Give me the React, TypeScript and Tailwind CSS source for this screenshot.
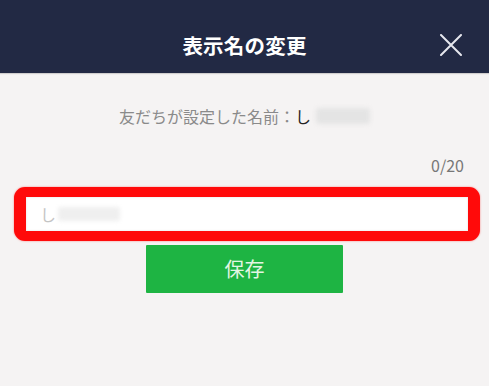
import React from 'react';

const jp = { fontFamily: '"Noto Sans CJK JP", "Noto Sans", sans-serif' };

function CloseIcon() {
  return (
    <svg width="22" height="22" viewBox="0 0 22 22" fill="none" className="text-[#e6e7ee]">
      <path d="M1 1L21 21M21 1L1 21" stroke="currentColor" strokeWidth="2" strokeLinecap="round" />
    </svg>
  );
}

export default function App() {
  return (
    <div className="w-[489px] h-[386px] bg-[#f5f3f3] overflow-hidden" style={jp}>
      {/* header */}
      <header className="relative h-[73px] bg-[#222944] pt-[17px] shadow-[0_1px_1px_rgba(0,0,0,0.15)]">
        <div className="h-[56px] flex items-center justify-center">
          <h1 className="text-white text-[20.5px] font-bold leading-none tracking-[0.2px]">表示名の変更</h1>
        </div>
        <button className="absolute left-[440px] top-[34px]">
          <CloseIcon />
        </button>
      </header>

      <main className="flex flex-col">
        <div className="mt-[31px] flex items-center justify-center text-[16px] leading-[24px]">
          <span className="text-[#8a8a8a]">友だちが設定した名前：</span>
          <span className="text-[#222]">し</span>
          <span className="ml-[5px] w-[54px] h-[16px] bg-[#e4e4e4] rounded-[3px] blur-[2px]"></span>
        </div>

        <div className="mt-[27px] pr-[25px] text-right text-[16px] leading-[20px] text-[#777]">0/20</div>

        <div className="mt-[12px] ml-[14px] w-[466px] h-[54px] rounded-[11px] border-y-[10px] border-x-[12px] border-[#ff0a0a] bg-white shadow-[0_0_2px_rgba(255,0,0,0.5)]">
          <div className="h-full flex items-center pl-[14px] shadow-[inset_0_0_2px_rgba(0,0,0,0.15)]">
            <span className="text-[16px] text-[#c4c4c4] leading-none">し</span>
            <span className="ml-[2px] w-[62px] h-[14px] bg-[#efefef] rounded-[3px] blur-[2px]"></span>
          </div>
        </div>

        <button className="mt-[4px] mx-auto w-[197px] h-[48px] bg-[#1eb443] text-[#e3f6e3] text-[20px] leading-none flex items-center justify-center rounded-[1px]">
          保存
        </button>
      </main>
    </div>
  );
}
